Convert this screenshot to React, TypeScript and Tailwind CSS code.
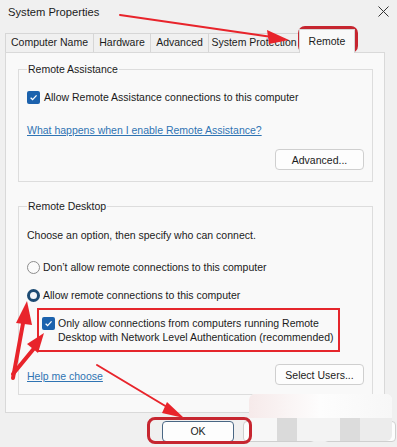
import React from 'react'

const font = { fontFamily: '"Liberation Sans", Arial, sans-serif' }

function Check() {
  return (
    <span className="w-[13px] h-[13px] rounded-[2px] bg-[#1c62ad] flex items-center justify-center shrink-0">
      <svg width="9" height="9" viewBox="0 0 10 10">
        <path d="M1.8 5.2 L4 7.3 L8.4 2.6" stroke="#fff" strokeWidth="1.4" fill="none" />
      </svg>
    </span>
  )
}

function Radio({ on }: { on?: boolean }) {
  return on ? (
    <span className="w-[13px] h-[13px] rounded-full border-[3px] border-[#1d4b73] bg-[#f4f7fa] shrink-0" />
  ) : (
    <span className="w-[13px] h-[13px] rounded-full border border-[#8d8d8d] bg-[#fbfbfb] shrink-0" />
  )
}

function Btn({ children, w = 'w-[89px]', dark }: { children: React.ReactNode; w?: string; dark?: boolean }) {
  return (
    <div
      className={`${w} h-[21px] rounded-[4px] border ${dark ? 'border-[#4a6784]' : 'border-[#cfcfcf]'} bg-[#fdfdfd] flex items-center justify-center text-[10.5px] text-[#1b1b1b]`}
    >
      {children}
    </div>
  )
}

const tabs = [
  { t: 'Computer Name', w: 'w-[88px]' },
  { t: 'Hardware', w: 'w-[57px]' },
  { t: 'Advanced', w: 'w-[58px]' },
  { t: 'System Protection', w: 'w-[91px]' },
]

export default function App() {
  return (
    <div className="relative w-[397px] h-[447px] overflow-hidden bg-[#f0f0f0] text-[#1b1b1b]" style={font}>
      {/* title bar */}
      <div className="h-[28px] flex items-start justify-between pl-[8px] pr-[8px] pt-[4px]">
        <span className="text-[11.2px] leading-[16px]">System Properties</span>
        <svg width="11" height="11" viewBox="0 0 11 11" className="mt-[2px]">
          <path d="M0.5 0.5 L10.5 10.5 M10.5 0.5 L0.5 10.5" stroke="#333" strokeWidth="1" />
        </svg>
      </div>

      {/* tabs */}
      <div className="h-[24px] flex items-end pl-[5px] text-[10.5px]">
        {tabs.map((x) => (
          <div
            key={x.t}
            className={`${x.w} h-[19px] border border-b-0 border-r-0 border-[#d6d6d6] bg-[#f0f0f0] flex items-center justify-center`}
          >
            {x.t}
          </div>
        ))}
        <div className="w-[56px] h-[24px] border border-b-0 border-[#d6d6d6] bg-[#f9f9f9] flex items-center justify-center -mb-[1px] relative z-10">
          Remote
        </div>
      </div>

      {/* tab page */}
      <div className="ml-[5px] w-[380px] h-[361px] border border-[#d9d9d9] bg-[#f9f9f9] pl-[12px] pt-[9px] text-[10.5px] leading-[14px]">
        <fieldset className="w-[355px] border border-[#dddddd] pl-[8px] pr-[8px] pb-[11px]">
          <legend className="px-[1px] leading-[14px]">Remote Assistance</legend>
          <div className="mt-[13px] h-[16px] flex items-center gap-[4px]">
            <Check />
            <span>Allow Remote Assistance connections to this computer</span>
          </div>
          <div className="mt-[17px] h-[16px] flex items-center">
            <span className="text-[#2f74b3] underline">What happens when I enable Remote Assistance?</span>
          </div>
          <div className="mt-[11px] flex justify-end">
            <Btn>Advanced...</Btn>
          </div>
        </fieldset>

        <fieldset className="mt-[17px] w-[355px] border border-[#dddddd] pl-[8px] pr-[8px] pb-[9px]">
          <legend className="px-[1px] leading-[14px]">Remote Desktop</legend>
          <div className="mt-[14px] h-[16px] flex items-center">Choose an option, then specify who can connect.</div>
          <div className="mt-[16px] h-[16px] flex items-center gap-[3px]">
            <Radio />
            <span>Don’t allow remote connections to this computer</span>
          </div>
          <div className="mt-[12px] h-[16px] flex items-center gap-[3px]">
            <Radio on />
            <span>Allow remote connections to this computer</span>
          </div>
          <div className="mt-[13px] pl-[15px] flex items-start gap-[3px]">
            <span className="mt-[1px]">
              <Check />
            </span>
            <span>
              Only allow connections from computers running Remote
              <br />
              Desktop with Network Level Authentication (recommended)
            </span>
          </div>
          <div className="mt-[20px] flex items-center justify-between">
            <span className="text-[#2f74b3] underline mt-[3px]">Help me choose</span>
            <Btn>Select Users...</Btn>
          </div>
        </fieldset>
      </div>

      {/* dialog buttons */}
      <div className="mt-[8px] pl-[162px] flex gap-[9px]">
        <Btn w="w-[72px]" dark>OK</Btn>
        <Btn w="w-[72px]">Cancel</Btn>
        <Btn w="w-[72px]">Apply</Btn>
      </div>

      {/* blurred patch over Cancel / Apply */}
      <div className="absolute left-[249px] top-[394px] w-[143px] h-[47px] rounded-[6px] bg-[#fbfbfb] overflow-hidden flex flex-col">
        <div className="h-[24px] bg-gradient-to-r from-[#f6eaea] via-[#fdfdfd] to-[#f7f7f7]" />
        <div className="flex-1 flex">
          <div className="w-[28px] bg-[#f7f7f7]" />
          <div className="w-[20px] bg-[#dadada]" />
          <div className="w-[43px] bg-[#f3f3f3]" />
          <div className="w-[20px] bg-[#dcdcdc]" />
          <div className="flex-1 bg-[#ececec]" />
        </div>
      </div>

      {/* red annotations */}
      <div className="absolute left-[298px] top-[26px] w-[60px] h-[27px] border-[3px] border-[#c62630] rounded-[7px]" />
      <div className="absolute left-[37px] top-[308px] w-[303px] h-[44px] border-2 border-[#e5262c]" />
      <div className="absolute left-[147px] top-[417px] w-[105px] h-[27px] border-[3px] border-[#c62630] rounded-[8px]" />

      <svg className="absolute inset-0 pointer-events-none" width="397" height="447" viewBox="0 0 397 447">
        <g fill="#e8242b" stroke="#e8242b" strokeLinecap="round">
          {/* to Remote tab */}
          <line x1="120" y1="15" x2="272" y2="37" strokeWidth="2" />
          <polygon points="289,40 267,30 269,44" stroke="none" />
          {/* to radio */}
          <line x1="13" y1="378" x2="24" y2="318" strokeWidth="4" />
          <polygon points="27,301 16,323 32,325" stroke="none" />
          {/* to checkbox */}
          <line x1="13" y1="374" x2="36" y2="346" strokeWidth="4" />
          <polygon points="44,333 27,344 38,353" stroke="none" />
          {/* to OK */}
          <line x1="97" y1="365" x2="172" y2="410" strokeWidth="2" />
          <polygon points="184,418 167,402 162,413" stroke="none" />
        </g>
      </svg>
    </div>
  )
}
